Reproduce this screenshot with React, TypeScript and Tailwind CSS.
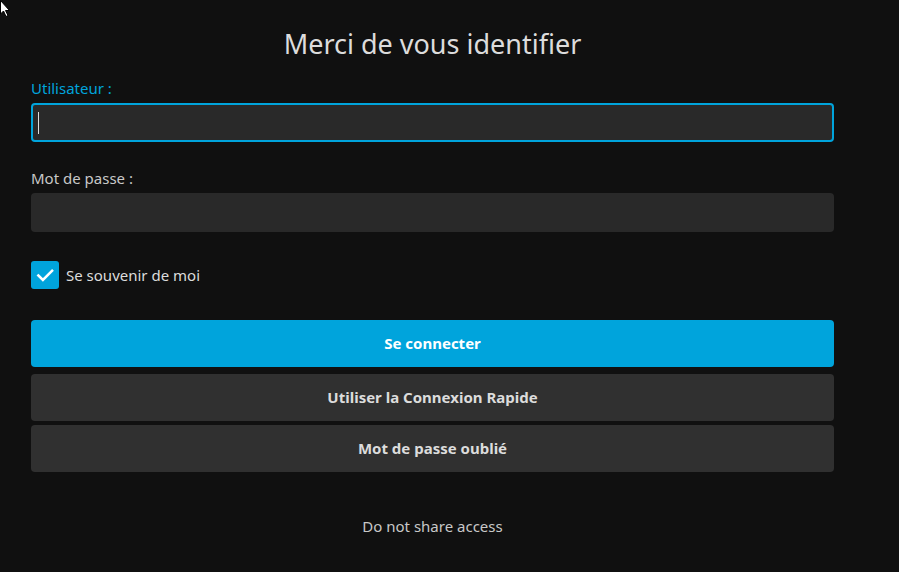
import React, { useState } from "react";

export default function App() {
    const [remember, setRemember] = useState(true);

    return (
        <div
            className="relative w-[899px] h-[572px] bg-[#101010] overflow-hidden"
            style={{ fontFamily: '"Noto Sans", "Open Sans", sans-serif' }}
        >
            {/* mouse pointer */}
            <svg className="absolute left-0 top-0" width="12" height="18" viewBox="0 0 12 18">
                <path d="M0.5 0.5 L0.5 14 L3.5 11 L6 16.5 L8 15.5 L5.5 10.5 L9.5 10.5 Z" fill="#fff" stroke="#000" strokeWidth="1" />
            </svg>

            <div className="ml-[31px] w-[803px] pt-[26px] flex flex-col">
                <h1 className="text-center text-[27px] leading-[36px] text-[#dcdcdc] font-normal">
                    Merci de vous identifier
                </h1>

                <label className="mt-[16px] text-[15px] leading-[20px] text-[#00a4dc]">Utilisateur :</label>
                <div className="mt-[5px] h-[39px] rounded-[4px] border-2 border-[#00a4dc] bg-[#292929] flex items-center px-[5px]">
                    <div className="w-px h-[22px] bg-[#ddd]" />
                </div>

                <label className="mt-[26px] text-[15px] leading-[20px] text-[#c8c8c8]">Mot de passe :</label>
                <input
                    type="password"
                    className="mt-[5px] h-[39px] rounded-[4px] bg-[#292929] outline-none px-2 text-white"
                />

                <div className="mt-[29px] flex items-center gap-[7px]">
                    <button
                        onClick={() => setRemember(!remember)}
                        className="w-[28px] h-[28px] rounded-[3px] bg-[#00a4dc] flex items-center justify-center"
                    >
                        {remember && (
                            <svg width="20" height="20" viewBox="0 0 24 24" fill="none" stroke="#fff" strokeWidth="3" strokeLinecap="square">
                                <path d="M4 12.5 L9.5 18 L20.5 7" />
                            </svg>
                        )}
                    </button>
                    <span className="text-[15px] text-[#dcdcdc]">Se souvenir de moi</span>
                </div>

                <button className="mt-[31px] h-[47px] rounded-[4px] bg-[#00a4dc] text-white text-[15px] font-bold">
                    Se connecter
                </button>
                <button className="mt-[7px] h-[47px] rounded-[4px] bg-[#303030] text-[#dcdcdc] text-[15px] font-bold">
                    Utiliser la Connexion Rapide
                </button>
                <button className="mt-[4px] h-[47px] rounded-[4px] bg-[#303030] text-[#dcdcdc] text-[15px] font-bold">
                    Mot de passe oublié
                </button>

                <p className="mt-[43px] text-center text-[15px] text-[#c8c8c8]">Do not share access</p>
            </div>
        </div>
    );
}
